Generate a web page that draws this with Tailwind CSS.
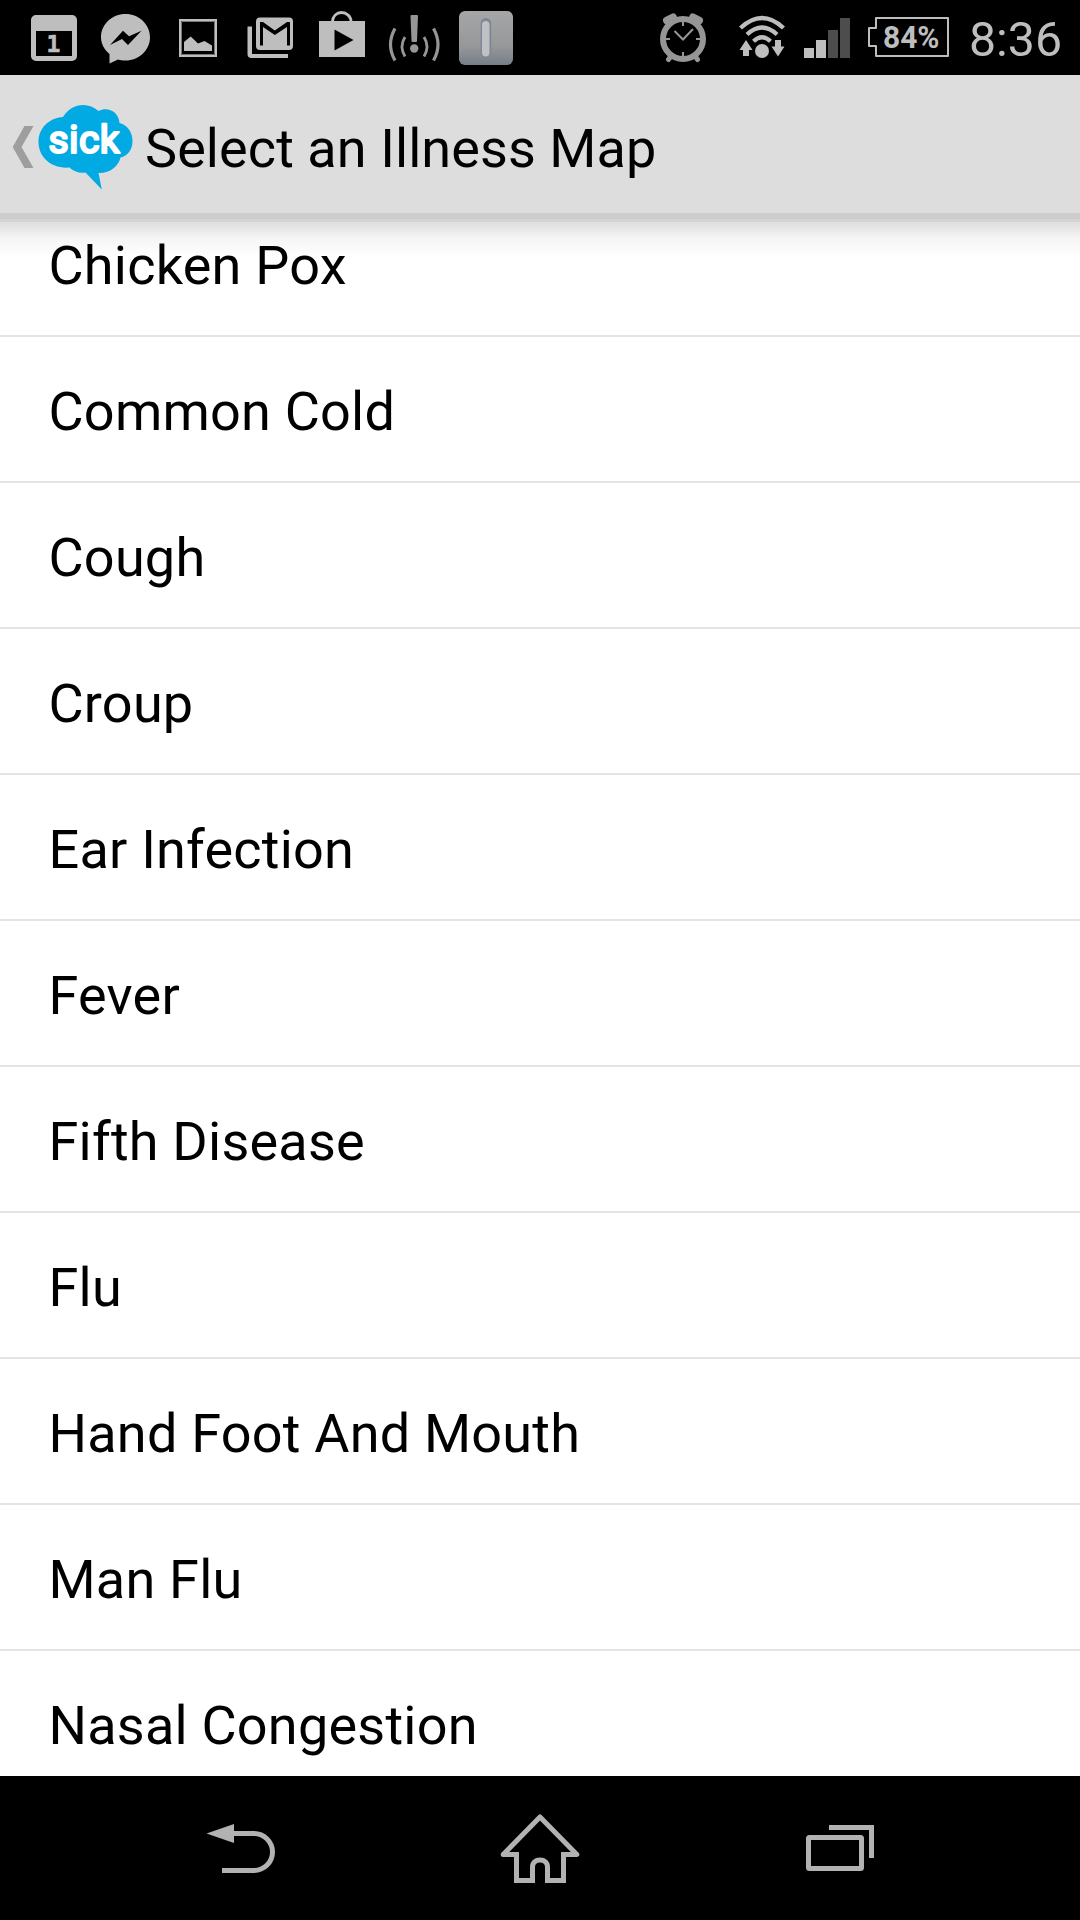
<!DOCTYPE html>
<html lang="en">
<head>
    <meta charset="UTF-8">
    <meta name="viewport" content="width=device-width, initial-scale=1.0">
    <title>Select an Illness Map</title>
    <script src="https://cdn.jsdelivr.net/npm/@tailwindcss/browser@4"></script>
</head>
<body class="bg-black">
    <div class="w-[1080px] h-[1920px] flex flex-col overflow-hidden bg-white text-black font-['Roboto',sans-serif]">

        <!-- Status bar -->
        <div class="h-[75px] shrink-0 bg-black text-[#bebebe] flex justify-between pl-[31px] pr-[18px]">
            <div class="flex">
                <!-- Calendar -->
                <svg class="w-[46px] h-[75px]" viewBox="31 0 46 75">
                    <path fill="currentColor" fill-rule="evenodd" d="M36 15h36a5 5 0 0 1 5 5v36a5 5 0 0 1-5 5H36a5 5 0 0 1-5-5V20a5 5 0 0 1 5-5zM36 31v25h36V31z"/>
                    <text x="46.500" y="52.200" font-family="DejaVu Sans Mono" font-weight="700" font-size="23" fill="currentColor" stroke="currentColor" stroke-width=".6">1</text>
                </svg>
                <!-- Messenger -->
                <svg class="w-[49px] h-[75px] ml-6" viewBox="101 0 49 75">
                    <path fill="currentColor" d="M125.500 14c13.500 0 24.500 10.400 24.500 23.300s-11 23.300-24.500 23.300c-2.800 0-5.200-.3-7.500-1.100l-8.500 4V54c-5.200-4.200-8.500-10-8.500-16.700C101 24.400 112 14 125.500 14z"/>
                    <path fill="#000" d="M110 45l13-14.300 6 5.600 12.500-5.600L128 45l-6-6z"/>
                </svg>
                <!-- Picture -->
                <svg class="w-[38px] h-[75px] ml-[29px]" viewBox="179 0 38 75">
                    <path fill="none" stroke="currentColor" stroke-width="2" d="M180 20h36v36h-36z"/>
                    <path fill="none" stroke="#777" stroke-width="1" d="M181.500 21.500h33v33h-33z"/>
                    <path fill="currentColor" d="M184 51V42l6.700-5.500 7.300 7 6.500-2.500 7.500 4.500V51z"/>
                </svg>
                <!-- Mail -->
                <svg class="w-[47px] h-[75px] ml-[30px]" viewBox="247 0 47 75">
                    <path fill="currentColor" fill-rule="evenodd" d="M260 17.500h29a4 4 0 0 1 4 4V46a4 4 0 0 1-4 4h-29a4 4 0 0 1-4-4V21.500a4 4 0 0 1 4-4zM260 22v23.500h3V27l11.800 8L287 27v18.500h3V22h-3l-12.200 8.500L263 22z"/>
                    <path fill="currentColor" d="M247.500 26.500h4.500V54h36v4h-36.500a4 4 0 0 1-4-4z"/>
                </svg>
                <!-- Play store -->
                <svg class="w-[46px] h-[75px] ml-[25px]" viewBox="319 0 46 75">
                    <path fill="none" stroke="currentColor" stroke-width="2.800" d="M332.500 23V21.500c0-5 4-9 9-9s9.500 4 9.500 9V23"/>
                    <path fill="currentColor" fill-rule="evenodd" d="M319 21h46v36h-46zM334.500 29.500v21L353.500 40z"/>
                </svg>
                <!-- Sound alert -->
                <svg class="w-[52px] h-[75px] ml-[23px] text-[#969696]" viewBox="388 0 52 75">
                    <path fill="currentColor" d="M410.500 16q0-1 1-1h5.500q1 0 1 1l-1 25q0 1-1 1h-3.500q-1 0-1-1z"/>
                    <circle cx="414.200" cy="48.500" r="4.200" fill="currentColor"/>
                    <path fill="none" stroke="currentColor" stroke-width="3.200" d="M395 28.500q-9 16 0 32M433.500 28.500q9 16 0 32"/>
                    <path fill="none" stroke="currentColor" stroke-width="2.800" d="M405 37q-6 9.500 0 19.500M424 37q6 9.500 0 19.500"/>
                </svg>
                <!-- App tile -->
                <svg class="w-[54px] h-[75px] ml-[19px]" viewBox="459 0 54 75">
                    <defs>
                        <linearGradient id="tile" x1="0" y1="0" x2="0" y2="1">
                            <stop offset="0" stop-color="#a5a6a8"/>
                            <stop offset=".65" stop-color="#979899"/>
                            <stop offset="1" stop-color="#777e89"/>
                        </linearGradient>
                    </defs>
                    <rect x="459" y="11" width="54" height="54" rx="6" fill="url(#tile)"/>
                    <rect x="480.700" y="18" width="10.500" height="39.500" rx="5.200" fill="#7d8694"/>
                    <rect x="482" y="21" width="7.500" height="35.500" rx="3.700" fill="#bfc1c4"/>
                </svg>
            </div>

            <div class="flex">
                <!-- Alarm -->
                <svg class="w-[46px] h-[75px] text-[#969696]" viewBox="660 0 46 75">
                    <g fill="none" stroke="currentColor">
                        <ellipse cx="683" cy="39" rx="20" ry="20" stroke-width="6"/>
                        <path stroke-width="8" stroke-linecap="round" d="M667 20.500l6-3M699 20.500l-6-3"/>
                        <path stroke-width="5" stroke-linecap="round" d="M671 56l-2.500 3.500M695 56l2.500 3.500"/>
                        <path stroke-width="2" d="M683 21v5M683 52v5M665 39h5M696 39h5M674.500 31l8.500 8.500L693 29"/>
                    </g>
                </svg>
                <!-- Wi-Fi with traffic arrows -->
                <svg class="w-[46px] h-[75px] ml-[33px]" viewBox="739 0 46 75">
                    <g fill="none" stroke="currentColor" stroke-width="4.300">
                        <path d="M740.500 28q21.500-20 43 0"/>
                        <path d="M747 34.500q15-14 30 0"/>
                        <path d="M753.500 41.300q8.500-8 17 0"/>
                    </g>
                    <circle cx="762" cy="51" r="7" fill="currentColor"/>
                    <path fill="currentColor" d="M746 40l6.500 10H749v6h-6v-6h-3.500zM775 40h6v6.500h3.500L778 56.500l-6.500-10h3.500z"/>
                </svg>
                <!-- Signal -->
                <svg class="w-[46px] h-[75px] ml-[19px]" viewBox="804 0 46 75">
                    <path fill="currentColor" d="M804 48h10v10h-10zM816 40h10v18h-10z"/>
                    <path fill="#4d4d4d" d="M828 30h10v28h-10zM840 18h10v40h-10z"/>
                </svg>
                <!-- Battery -->
                <svg class="w-[81px] h-[75px] ml-[18px]" viewBox="868 0 81 75">
                    <path fill="none" stroke="currentColor" stroke-width="2" stroke-linejoin="round" d="M876 18h72v38h-72V46h-7V28h7z"/>
                    <text x="883" y="47.500" textLength="56.500" lengthAdjust="spacingAndGlyphs" font-family="Roboto" font-weight="700" font-size="31" fill="currentColor">84%</text>
                </svg>
                <svg class="w-[93px] h-[75px] ml-5" viewBox="969 0 93 75">
                    <text x="969" y="55.500" textLength="93" lengthAdjust="spacingAndGlyphs" font-family="Roboto" font-size="49" fill="currentColor">8:36</text>
                </svg>
            </div>
        </div>

        <!-- Action bar -->
        <header class="relative z-10 h-36 shrink-0 bg-[#dddddd] border-b-6 border-[#cccccc] flex">
            <svg class="w-[133px] h-[138px]" viewBox="0 75 133 138">
                <path fill="#9e9e9e" d="M24.500 126H33.500L21.500 147 33.500 168H24.500L12.700 147z"/>
                <path fill="#02aae4" d="M63 117C68 109 75 105 83 105c6 0 11 2 15.500 6 9-4.500 20 0 21 12 8 2 13 9 13 18 0 9-5 15-12 16.500-2 9-11 16-22 15.500L101.800 189.500 85.500 172.500c-6 1-12-1-16-5C51 169 38.500 157 38.500 142 38.500 128 49 118 63 117z"/>
                <text x="48.500" y="152.500" textLength="71" lengthAdjust="spacing" font-family="Roboto" font-weight="400" font-size="39" fill="#fff" stroke="#fff" stroke-width="2.200" stroke-linejoin="round">sick</text>
            </svg>
            <h1 class="ml-3 pt-[5px] text-[54px] leading-[138px] tracking-[0.08px] whitespace-nowrap">Select an Illness Map</h1>
            <!-- drop shadow under the bar -->
            <div class="absolute left-0 top-36 w-full h-[3px] bg-[#d3d3d3]"></div>
            <div class="absolute left-0 top-[147px] w-full h-9 bg-linear-to-b from-black/13 via-black/4 via-45% to-transparent"></div>
        </header>

        <!-- Illness list -->
        <main class="flex-1 min-h-0 overflow-hidden">
            <ul class="-mt-7 text-[54px] leading-[144px] tracking-[0.22px] [&>li]:h-[146px] [&>li]:border-b-2 [&>li]:border-[#e4e4e4] [&>li]:pl-[48.5px] [&>li]:pt-[3px]">
                <li>Chicken Pox</li>
                <li>Common Cold</li>
                <li>Cough</li>
                <li>Croup</li>
                <li>Ear Infection</li>
                <li>Fever</li>
                <li>Fifth Disease</li>
                <li>Flu</li>
                <li>Hand Foot And Mouth</li>
                <li>Man Flu</li>
                <li>Nasal Congestion</li>
            </ul>
        </main>

        <!-- Navigation bar -->
        <nav class="h-36 shrink-0 bg-black text-[#b2b2b2] flex pl-[206px]">
            <svg class="w-[70px] h-36" viewBox="206 1776 70 144">
                <path fill="currentColor" d="M206.500 1833.500l27.500-9.500v19z"/>
                <path fill="none" stroke="currentColor" stroke-width="5" d="M233 1833.500h21a18.500 18.500 0 0 1 0 37h-32"/>
            </svg>
            <svg class="w-[80px] h-36 ml-[224px]" viewBox="500 1776 80 144">
                <path fill="none" stroke="currentColor" stroke-width="5" stroke-linejoin="round" stroke-linecap="round" d="M516.500 1854.500H503.200L540 1817l36.800 37.500H563.500"/>
                <path fill="none" stroke="currentColor" stroke-width="5" d="M516.500 1852v28.500h16V1867c0-4.500 3-7 7.500-7s7.500 2.500 7.500 7v13.500h16V1852"/>
            </svg>
            <svg class="w-[70px] h-36 ml-[225px]" viewBox="805 1776 70 144">
                <rect x="808.500" y="1837.500" width="53" height="31" rx="1" fill="none" stroke="currentColor" stroke-width="5"/>
                <path fill="none" stroke="currentColor" stroke-width="5" d="M829 1827.500h42.500V1858"/>
            </svg>
        </nav>
    </div>
</body>
</html>
